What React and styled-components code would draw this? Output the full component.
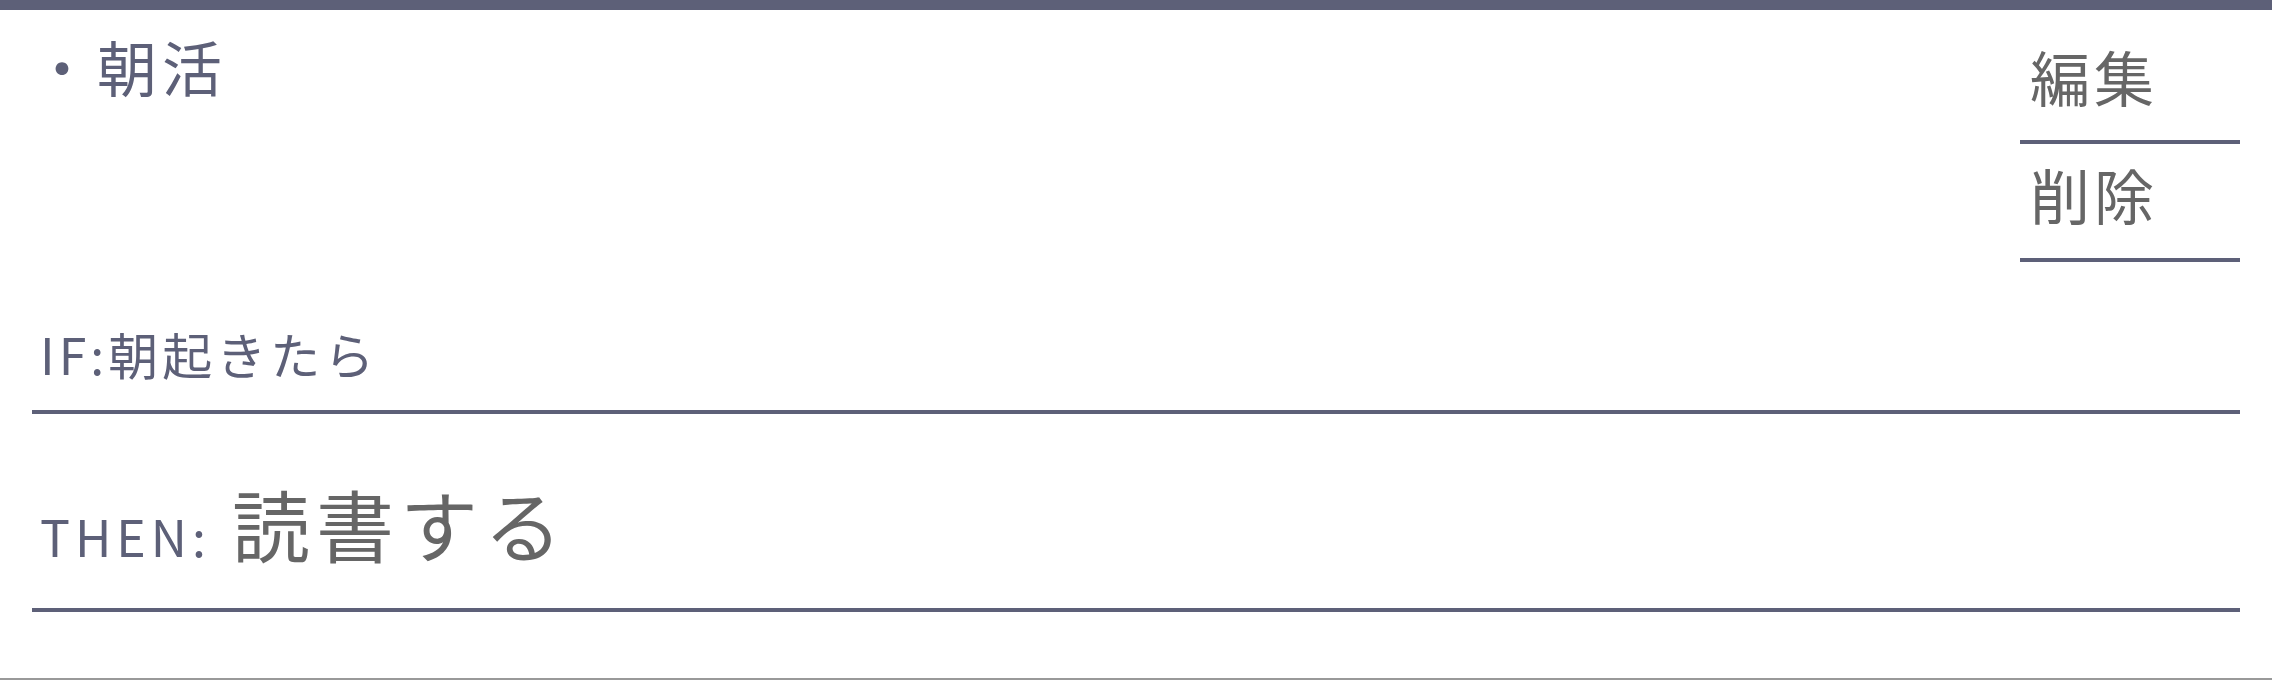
import React from "react";
import styled, { createGlobalStyle } from "styled-components";

const Global = createGlobalStyle`
  html, body { margin: 0; padding: 0; background: #ffffff; }
  body { font-family: "Noto Sans CJK JP", "Noto Sans", sans-serif; }
  * { box-sizing: border-box; }
`;

const Card = styled.section`
  height: 680px;
  border-top: 10px solid #5d6078;
  border-bottom: 2px solid #999999;
  padding: 0 32px;
  background: #ffffff;
`;

const Header = styled.header`
  display: flex;
  justify-content: space-between;
  align-items: flex-start;
  padding-top: 16px;
`;

const Title = styled.h2`
  margin: 10px 0 0;
  font-size: 60px;
  line-height: 1;
  font-weight: 400;
  letter-spacing: 5px;
  color: #5d6078;
`;

const Actions = styled.div`
  display: flex;
  flex-direction: column;
  width: 220px;
`;

const ActionButton = styled.button`
  display: block;
  height: 118px;
  padding: 0 0 14px 10px;
  margin: 0;
  border: none;
  border-bottom: 4px solid #5d6078;
  background: transparent;
  text-align: left;
  font-family: inherit;
  font-size: 60px;
  line-height: 1;
  letter-spacing: 4px;
  color: #666666;
  cursor: pointer;
`;

const Row = styled.div`
  padding: ${(p) => p.$pad};
  border-bottom: 4px solid #5d6078;
  line-height: 1;
  font-size: ${(p) => p.$size}px;
`;

const Label = styled.span`
  font-size: 50px;
  letter-spacing: ${(p) => p.$ls};
  color: #5d6078;
`;

const Value = styled.span`
  margin-left: 5px;
  font-size: 78px;
  letter-spacing: 6px;
  color: #666666;
`;

export default function App() {
  return (
    <>
      <Global />
      <Card>
        <Header>
          <Title>・朝活</Title>
          <Actions>
            <ActionButton>編集</ActionButton>
            <ActionButton>削除</ActionButton>
          </Actions>
        </Header>
        <Row $pad="66px 0 32px 8px" $size={50}>
          <Label $ls="4px">IF:朝起きたら</Label>
        </Row>
        <Row $pad="70px 0 46px 8px" $size={78}>
          <Label $ls="5px">THEN: </Label>
          <Value>読書する</Value>
        </Row>
      </Card>
    </>
  );
}
